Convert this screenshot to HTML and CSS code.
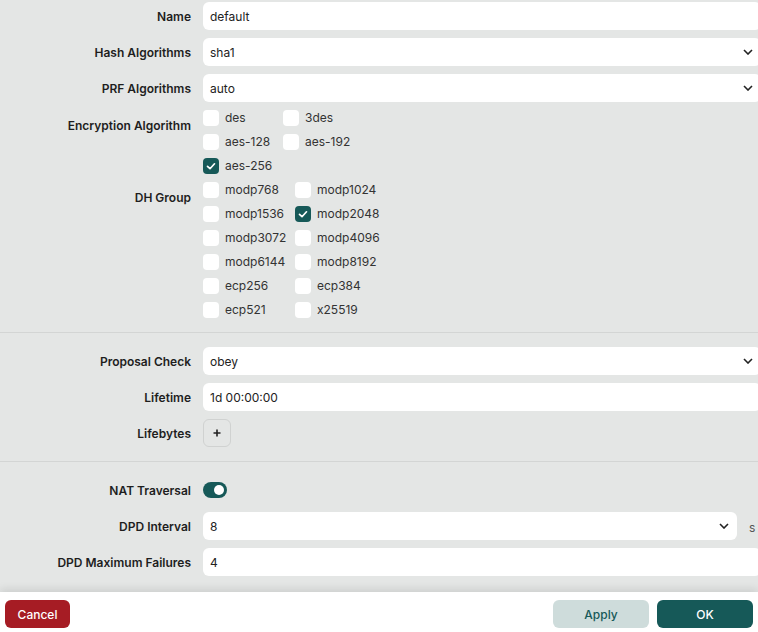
FILE: index.html
```html
<!DOCTYPE html>
<html lang="en">
<head>
<meta charset="utf-8">
<title>IKE Proposal</title>
<link rel="stylesheet" href="styles.css">
</head>
<body>
<div class="content">
  <div class="section first">
    <label class="lbl">Name</label>
    <div class="field"><div class="input">default</div></div>

    <label class="lbl">Hash Algorithms</label>
    <div class="field"><div class="input select">sha1<svg class="chev" viewBox="0 0 10 6"><polyline points="1,1 5,5 9,1"/></svg></div></div>

    <label class="lbl">PRF Algorithms</label>
    <div class="field"><div class="input select">auto<svg class="chev" viewBox="0 0 10 6"><polyline points="1,1 5,5 9,1"/></svg></div></div>

    <label class="lbl top">Encryption Algorithm</label>
    <div class="field checks enc">
      <div class="chk"><span class="box"></span><span class="txt">des</span></div>
      <div class="chk"><span class="box"></span><span class="txt">3des</span></div>
      <div class="chk"><span class="box"></span><span class="txt">aes-128</span></div>
      <div class="chk"><span class="box"></span><span class="txt">aes-192</span></div>
      <div class="chk"><span class="box on"><svg viewBox="0 0 16 16"><polyline points="4.5,8.3 7,10.7 11.5,5.8"/></svg></span><span class="txt">aes-256</span></div>
    </div>

    <label class="lbl top">DH Group</label>
    <div class="field checks dh">
      <div class="chk"><span class="box"></span><span class="txt">modp768</span></div>
      <div class="chk"><span class="box"></span><span class="txt">modp1024</span></div>
      <div class="chk"><span class="box"></span><span class="txt">modp1536</span></div>
      <div class="chk"><span class="box on"><svg viewBox="0 0 16 16"><polyline points="4.5,8.3 7,10.7 11.5,5.8"/></svg></span><span class="txt">modp2048</span></div>
      <div class="chk"><span class="box"></span><span class="txt">modp3072</span></div>
      <div class="chk"><span class="box"></span><span class="txt">modp4096</span></div>
      <div class="chk"><span class="box"></span><span class="txt">modp6144</span></div>
      <div class="chk"><span class="box"></span><span class="txt">modp8192</span></div>
      <div class="chk"><span class="box"></span><span class="txt">ecp256</span></div>
      <div class="chk"><span class="box"></span><span class="txt">ecp384</span></div>
      <div class="chk"><span class="box"></span><span class="txt">ecp521</span></div>
      <div class="chk"><span class="box"></span><span class="txt">x25519</span></div>
    </div>
  </div>

  <div class="section">
    <label class="lbl">Proposal Check</label>
    <div class="field"><div class="input select">obey<svg class="chev" viewBox="0 0 10 6"><polyline points="1,1 5,5 9,1"/></svg></div></div>

    <label class="lbl">Lifetime</label>
    <div class="field"><div class="input">1d 00:00:00</div></div>

    <label class="lbl">Lifebytes</label>
    <div class="field"><button class="add"><svg viewBox="0 0 8 8"><path d="M4 0.5v7M0.5 4h7"/></svg></button></div>
  </div>

  <div class="section last">
    <label class="lbl">NAT Traversal</label>
    <div class="field"><span class="toggle"><span class="knob"></span></span></div>

    <label class="lbl">DPD Interval</label>
    <div class="field unitrow"><div class="input select grow">8<svg class="chev" viewBox="0 0 10 6"><polyline points="1,1 5,5 9,1"/></svg></div><span class="unit">s</span></div>

    <label class="lbl">DPD Maximum Failures</label>
    <div class="field"><div class="input">4</div></div>
  </div>
</div>
<div class="footer">
  <button class="btn cancel">Cancel</button>
  <span class="spacer"></span>
  <button class="btn apply">Apply</button>
  <button class="btn ok">OK</button>
</div>
</body>
</html>
```

FILE: styles.css
```css
* { box-sizing: border-box; }

html, body {
  margin: 0;
  padding: 0;
}

body {
  width: 758px;
  height: 632px;
  overflow: hidden;
  display: flex;
  flex-direction: column;
  background: #e4e6e5;
  font-family: Inter, "Noto Sans", sans-serif;
  color: #222;
}

.content {
  flex: 1;
  overflow: hidden;
  padding-top: 2px;
}

.section {
  display: grid;
  grid-template-columns: 191px 558px;
  column-gap: 12px;
  row-gap: 8px;
  width: 761px;
  padding: 14px 0 14px;
  border-bottom: 1px solid #d3d5d4;
}

.section.first { padding-top: 0; }
.section.last { border-bottom: none; }

.lbl {
  font-size: 12px;
  font-weight: 600;
  line-height: 30px;
  height: 28px;
  text-align: right;
  color: #1e1e1e;
  white-space: nowrap;
}

.lbl.top {
  align-self: start;
  line-height: 32px;
}

.field {
  min-height: 28px;
  display: flex;
  align-items: center;
}

.input {
  position: relative;
  width: 100%;
  height: 28px;
  line-height: 30px;
  background: #fff;
  border-radius: 6px;
  padding: 0 7px;
  font-size: 12px;
  color: #222;
}

.chev {
  position: absolute;
  right: 8px;
  top: 11px;
  width: 10px;
  height: 6px;
  fill: none;
  stroke: #222;
  stroke-width: 1.6;
}

.unitrow .grow { flex: 1; width: auto; }

.unit {
  width: 12px;
  margin-left: 12px;
  padding-top: 2px;
  font-size: 12px;
  color: #555;
}

.checks {
  display: grid;
  row-gap: 8px;
  align-items: center;
}

.checks.enc { grid-template-columns: 80px auto; }
.checks.dh { grid-template-columns: 92px auto; }

.chk {
  display: flex;
  align-items: flex-start;
  gap: 6px;
  height: 16px;
  font-size: 12px;
  color: #333;
  white-space: nowrap;
}

.txt {
  line-height: 15px;
}

.box {
  width: 16px;
  height: 16px;
  flex: none;
  background: #fff;
  border-radius: 4px;
  display: flex;
}

.box.on { background: #165958; }

.box svg {
  width: 16px;
  height: 16px;
  fill: none;
  stroke: #fff;
  stroke-width: 1.7;
  stroke-linecap: round;
  stroke-linejoin: round;
}

.add {
  width: 28px;
  height: 28px;
  padding: 0;
  border: 1px solid #d0d2d1;
  border-radius: 6px;
  background: transparent;
  display: flex;
  align-items: center;
  justify-content: center;
}

.add svg {
  width: 8px;
  height: 8px;
  stroke: #222;
  stroke-width: 1.6;
}

.toggle {
  width: 24px;
  height: 16px;
  border-radius: 8px;
  background: #165958;
  display: flex;
  align-items: center;
  justify-content: flex-end;
  padding-right: 3px;
}

.knob {
  width: 10px;
  height: 10px;
  border-radius: 50%;
  background: #fff;
}

.footer {
  height: 40px;
  flex: none;
  background: #fff;
  display: flex;
  align-items: flex-start;
  gap: 8px;
  padding: 8px 5px 0;
  box-shadow: 0 -3px 8px rgba(0, 0, 0, 0.1);
  position: relative;
}

.spacer { flex: 1; }

.btn {
  height: 28px;
  border: none;
  border-radius: 6px;
  font-family: Inter, "Noto Sans", sans-serif;
  font-size: 12px;
  font-weight: 500;
  padding: 1px 0 0;
}

.cancel {
  width: 65px;
  background: #a61c24;
  color: #fff;
}

.apply {
  width: 96px;
  background: #cedcdb;
  color: #165958;
}

.ok {
  width: 96px;
  background: #165958;
  color: #fff;
}
```
